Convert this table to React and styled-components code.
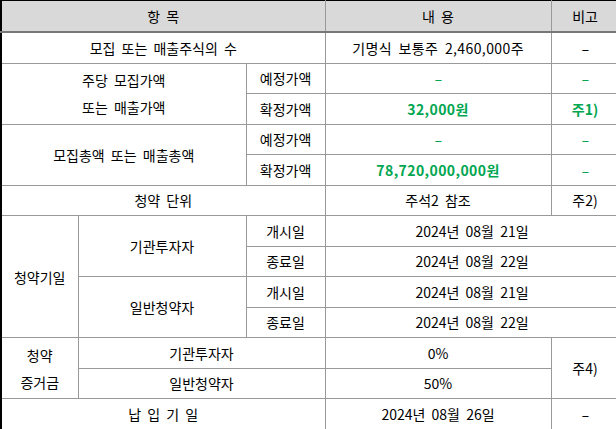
import React from 'react';
import styled, { createGlobalStyle } from 'styled-components';

const GlobalStyle = createGlobalStyle`
  html, body {
    margin: 0;
    padding: 0;
    background: #fff;
    overflow: hidden;
  }
`;

const Sheet = styled.table`
  width: 618px;
  border-collapse: collapse;
  table-layout: fixed;
  font-family: "Noto Sans CJK KR", "Noto Sans", sans-serif;
  font-size: 14px;
  word-spacing: 3px;
  color: #000;
  border-top: 1px solid #000;
  border-left: 2px solid #000;
  border-bottom: 2px solid #000;
`;

const HeadCell = styled.th`
  height: 30px;
  padding: 0;
  background: #d9d9d9;
  font-weight: 400;
  text-align: center;
  border: 1px solid #999;
  border-top: none;
  border-bottom: 2px solid #777;
  white-space: pre;
`;

const Cell = styled.td`
  height: 29.5px;
  padding: 0;
  text-align: center;
  vertical-align: middle;
  border: 1px solid #999;
  line-height: 18px;
  white-space: pre;
  letter-spacing: ${(p) => (p.$num ? '0.4px' : '0')};
  color: ${(p) => (p.$green ? '#00a650' : '#000')};
  font-weight: ${(p) => (p.$bold ? 700 : 400)};
`;

const Line = styled.div`
  line-height: 18px;
  & + & {
    margin-top: 9px;
  }
`;

const Dash = styled.span`
  display: inline-block;
  transform: scaleX(1.7);
  font-weight: 400;
`;

function Lines({ lines }) {
  return lines.map((l, i) => <Line key={i}>{l}</Line>);
}

export default function App() {
  return (
    <>
      <GlobalStyle />
      <Sheet>
        <colgroup>
          <col style={{ width: 77 }} />
          <col style={{ width: 168 }} />
          <col style={{ width: 79 }} />
          <col style={{ width: 226 }} />
          <col style={{ width: 68 }} />
        </colgroup>
        <thead>
          <tr>
            <HeadCell colSpan={3}>항 목</HeadCell>
            <HeadCell>내 용</HeadCell>
            <HeadCell>비고</HeadCell>
          </tr>
        </thead>
        <tbody>
          <tr>
            <Cell colSpan={3}>모집 또는 매출주식의 수</Cell>
            <Cell $num>기명식 보통주 2,460,000주</Cell>
            <Cell><Dash>-</Dash></Cell>
          </tr>
          <tr>
            <Cell colSpan={2} rowSpan={2}>
              <Lines lines={['주당 모집가액', '또는 매출가액']} />
            </Cell>
            <Cell>예정가액</Cell>
            <Cell $green><Dash>-</Dash></Cell>
            <Cell $green><Dash>-</Dash></Cell>
          </tr>
          <tr>
            <Cell>확정가액</Cell>
            <Cell $green $bold $num>32,000원</Cell>
            <Cell $green $bold>주1)</Cell>
          </tr>
          <tr>
            <Cell colSpan={2} rowSpan={2}>모집총액 또는 매출총액</Cell>
            <Cell>예정가액</Cell>
            <Cell $green><Dash>-</Dash></Cell>
            <Cell $green><Dash>-</Dash></Cell>
          </tr>
          <tr>
            <Cell>확정가액</Cell>
            <Cell $green $bold $num>78,720,000,000원</Cell>
            <Cell $green><Dash>-</Dash></Cell>
          </tr>
          <tr>
            <Cell colSpan={3}>청약 단위</Cell>
            <Cell>주석2 참조</Cell>
            <Cell>주2)</Cell>
          </tr>
          <tr>
            <Cell rowSpan={4}>청약기일</Cell>
            <Cell rowSpan={2}>기관투자자</Cell>
            <Cell>개시일</Cell>
            <Cell colSpan={2}>2024년 08월 21일</Cell>
          </tr>
          <tr>
            <Cell>종료일</Cell>
            <Cell colSpan={2}>2024년 08월 22일</Cell>
          </tr>
          <tr>
            <Cell rowSpan={2}>일반청약자</Cell>
            <Cell>개시일</Cell>
            <Cell colSpan={2}>2024년 08월 21일</Cell>
          </tr>
          <tr>
            <Cell>종료일</Cell>
            <Cell colSpan={2}>2024년 08월 22일</Cell>
          </tr>
          <tr>
            <Cell rowSpan={2}>
              <Lines lines={['청약', '증거금']} />
            </Cell>
            <Cell colSpan={2}>기관투자자</Cell>
            <Cell>0%</Cell>
            <Cell rowSpan={2}>주4)</Cell>
          </tr>
          <tr>
            <Cell colSpan={2}>일반청약자</Cell>
            <Cell>50%</Cell>
          </tr>
          <tr>
            <Cell colSpan={3}>납 입 기 일</Cell>
            <Cell>2024년 08월 26일</Cell>
            <Cell><Dash>-</Dash></Cell>
          </tr>
        </tbody>
      </Sheet>
    </>
  );
}
